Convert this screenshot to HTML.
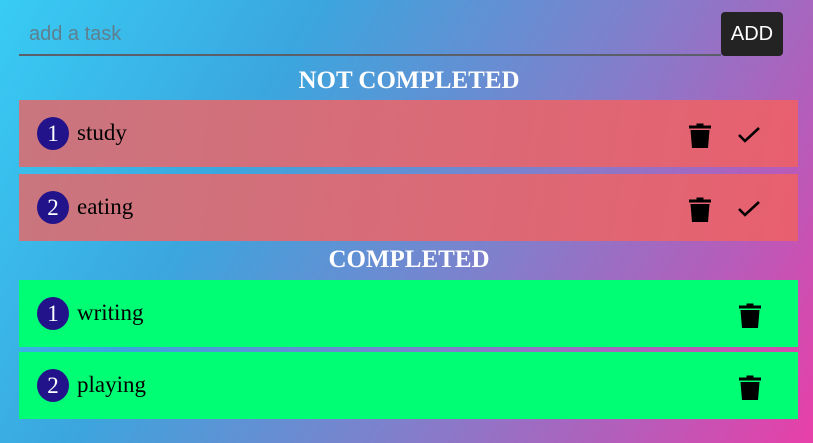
<!DOCTYPE html>
<html><head><style>
*{margin:0;padding:0;box-sizing:border-box}
body{width:813px;height:443px;overflow:hidden;background:linear-gradient(120deg,#38ccf4 0%,#3ba6de 30%,#7f80cc 60%,#b060bc 80%,#e83fa8 100%);font-family:"Liberation Serif",serif;position:relative}
.inp{position:absolute;left:19px;top:12px;width:702px;height:44px;border-bottom:2px solid #5a5f6a;font-family:"Liberation Sans",sans-serif;font-size:20px;color:#5f7f8f;padding:11px 0 0 10px;transform-origin:left}
.btn{position:absolute;left:721px;top:12px;width:62px;height:44px;background:#232323;border-radius:4px;color:#fff;font-family:"Liberation Sans",sans-serif;font-size:20px;text-align:center;line-height:44px}
h2{position:absolute;left:0;width:818px;text-align:center;color:#fff;font-size:25px;font-weight:bold}
.row{position:absolute;left:19px;width:779px;height:67px}
.pk{background:linear-gradient(100deg,#c9767f,#e8606f)}
.gr{background:#00fe74}
.num{position:absolute;left:18px;top:17px;width:32px;height:33px;border-radius:50%;background:#23138a;color:#fff;font-size:23px;text-align:center;line-height:33px}
.t{position:absolute;left:58px;top:20px;font-size:23px;color:#000}
.ic{position:absolute;top:22px}
</style></head><body>
<div class="inp">add a task</div>
<div class="btn">ADD</div>
<h2 style="top:67px">NOT COMPLETED</h2>
<div class="row pk" style="top:100px"><div class="num">1</div><div class="t">study</div>
<svg class="ic" style="left:669px" width="24" height="27" viewBox="0 0 24 27"><path d="M1 3.5h22v3H1zM8.5 1.5h7v2h-7z M2.5 8h19l-1.5 18h-16z" fill="#000"/></svg>
<svg class="ic" style="left:718px;top:25px" width="24" height="20" viewBox="0 0 24 20"><path d="M2 10l6 6L22 3" stroke="#000" stroke-width="2.6" fill="none"/></svg></div>
<div class="row pk" style="top:174px"><div class="num">2</div><div class="t">eating</div>
<svg class="ic" style="left:669px" width="24" height="27" viewBox="0 0 24 27"><path d="M1 3.5h22v3H1zM8.5 1.5h7v2h-7z M2.5 8h19l-1.5 18h-16z" fill="#000"/></svg>
<svg class="ic" style="left:718px;top:25px" width="24" height="20" viewBox="0 0 24 20"><path d="M2 10l6 6L22 3" stroke="#000" stroke-width="2.6" fill="none"/></svg></div>
<h2 style="top:246px">COMPLETED</h2>
<div class="row gr" style="top:280px"><div class="num">1</div><div class="t">writing</div>
<svg class="ic" style="left:719px" width="24" height="27" viewBox="0 0 24 27"><path d="M1 3.5h22v3H1zM8.5 1.5h7v2h-7z M2.5 8h19l-1.5 18h-16z" fill="#000"/></svg></div>
<div class="row gr" style="top:352px"><div class="num">2</div><div class="t">playing</div>
<svg class="ic" style="left:719px" width="24" height="27" viewBox="0 0 24 27"><path d="M1 3.5h22v3H1zM8.5 1.5h7v2h-7z M2.5 8h19l-1.5 18h-16z" fill="#000"/></svg></div>
</body></html>
